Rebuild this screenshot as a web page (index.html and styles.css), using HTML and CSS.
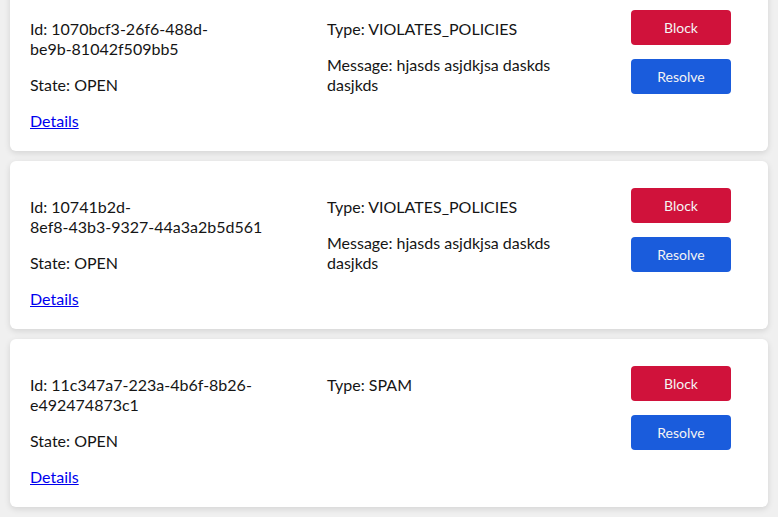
FILE: index.html
```html
<!DOCTYPE html>
<html lang="en">
<head>
<meta charset="utf-8">
<title>Reports</title>
<link rel="stylesheet" href="styles.css">
</head>
<body>
<div class="list">
  <div class="card">
    <div class="col">
      <p>Id: 1070bcf3-26f6-488d-<br>be9b-81042f509bb5</p>
      <p>State: OPEN</p>
      <p><a href="#">Details</a></p>
    </div>
    <div class="col">
      <p>Type: VIOLATES_POLICIES</p>
      <p>Message: hjasds asjdkjsa daskds dasjkds</p>
    </div>
    <div class="actions">
      <button class="btn btn-block">Block</button>
      <button class="btn btn-resolve">Resolve</button>
    </div>
  </div>
  <div class="card">
    <div class="col">
      <p>Id: 10741b2d-<br>8ef8-43b3-9327-44a3a2b5d561</p>
      <p>State: OPEN</p>
      <p><a href="#">Details</a></p>
    </div>
    <div class="col">
      <p>Type: VIOLATES_POLICIES</p>
      <p>Message: hjasds asjdkjsa daskds dasjkds</p>
    </div>
    <div class="actions">
      <button class="btn btn-block">Block</button>
      <button class="btn btn-resolve">Resolve</button>
    </div>
  </div>
  <div class="card">
    <div class="col">
      <p>Id: 11c347a7-223a-4b6f-8b26-<br>e492474873c1</p>
      <p>State: OPEN</p>
      <p><a href="#">Details</a></p>
    </div>
    <div class="col">
      <p>Type: SPAM</p>
    </div>
    <div class="actions">
      <button class="btn btn-block">Block</button>
      <button class="btn btn-resolve">Resolve</button>
    </div>
  </div>
</div>
</body>
</html>
```
FILE: styles.css
```css
html, body {
  margin: 0;
  padding: 0;
  background: #f0f0f0;
}
body {
  font-family: Lato, "Noto Sans", sans-serif;
  font-size: 16px;
  line-height: 20px;
  color: #151515;
}
.list {
  display: flex;
  flex-direction: column;
  gap: 10px;
  padding: 0 10px 10px;
  margin-top: -17px;
}
.card {
  background: #fff;
  border-radius: 6px;
  box-shadow: 0 2px 6px rgba(0, 0, 0, 0.12);
  padding: 20px 20px 20px;
  display: grid;
  grid-template-columns: 240px 240px 1fr;
  column-gap: 57px;
  align-items: start;
}
.col p {
  margin: 16px 0;
}
.col p:last-child {
  margin-bottom: 0;
}
.col a {
  color: #0000ee;
}
.actions {
  display: flex;
  flex-direction: column;
  align-items: flex-start;
}
.btn {
  width: 100px;
  height: 35px;
  margin: 7px;
  border: none;
  border-radius: 4px;
  color: #f4f4f4;
  font-family: Lato, "Noto Sans", sans-serif;
  font-size: 14px;
  cursor: pointer;
}
.btn-block {
  background: #d0123b;
}
.btn-resolve {
  background: #1a5cdc;
}
```
